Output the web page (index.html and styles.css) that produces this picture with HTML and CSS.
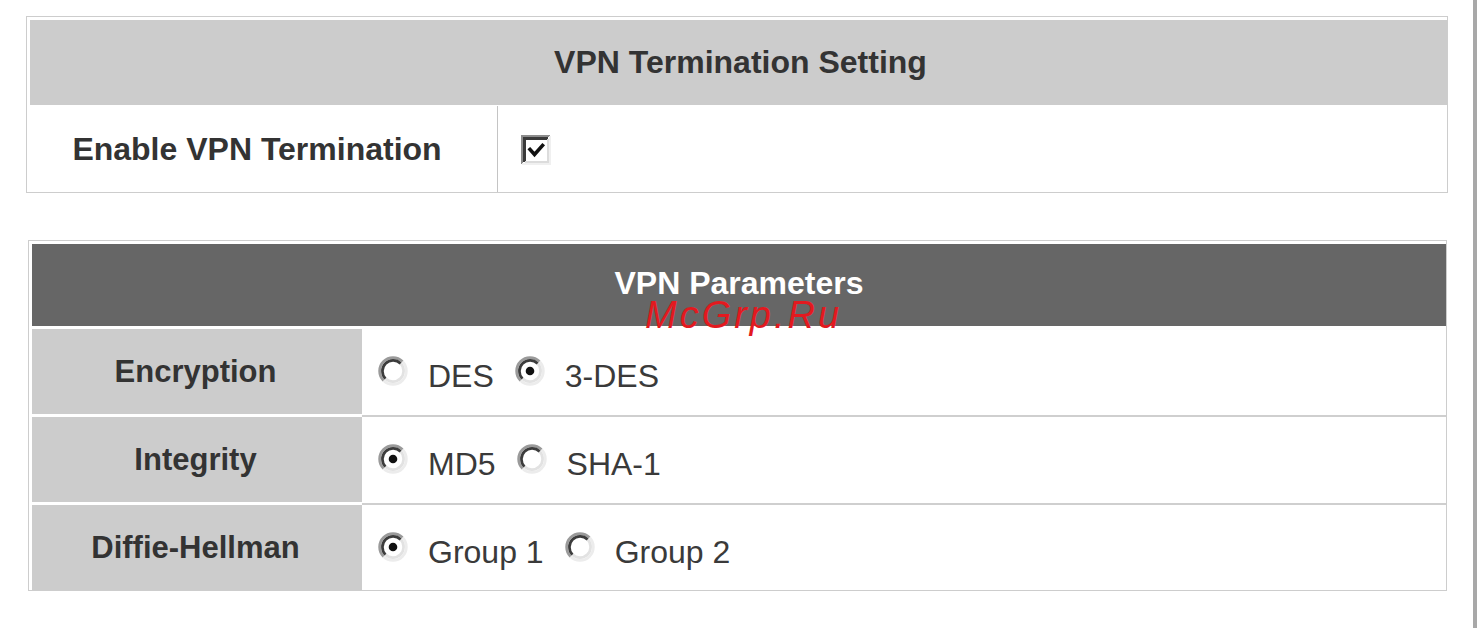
FILE: index.html
```html
<!DOCTYPE html>
<html lang="en">
<head>
<meta charset="utf-8">
<title>VPN Termination Setting</title>
<link rel="stylesheet" href="styles.css">
</head>
<body>
<div class="page">
  <main class="content">
    <section class="panel panel-setting">
      <div class="head head-light">VPN Termination Setting</div>
      <div class="row-setting">
        <div class="cell-label">Enable VPN Termination</div>
        <div class="cell-value">
          <svg class="checkbox" width="30" height="30" viewBox="0 0 30 30" aria-hidden="true">
            <rect x="0" y="0" width="30" height="30" fill="#ffffff"/>
            <path d="M1 29 V1 H29" fill="none" stroke="#8c8c8c" stroke-width="2"/>
            <path d="M3.5 27 V3.5 H27" fill="none" stroke="#3a3a3a" stroke-width="3"/>
            <path d="M29 1 V29 H1" fill="none" stroke="#f0f0f0" stroke-width="2"/>
            <path d="M27 4 V27 H4" fill="none" stroke="#dcdcdc" stroke-width="2"/>
            <path d="M9 14.5 L13.5 19.5 L21.5 10.5" fill="none" stroke="#111" stroke-width="3.6" stroke-linecap="square"/>
          </svg>
        </div>
      </div>
    </section>

    <section class="panel panel-params">
      <div class="head head-dark"><span class="head-text">VPN Parameters</span></div>
      <div class="row">
        <div class="label">Encryption</div>
        <div class="val">
          <span class="opt"><svg class="radio" width="30" height="30" viewBox="0 0 28 28"><path d="M22.84 5.16 A12.5 12.5 0 0 1 5.16 22.84" fill="none" stroke="#ececec" stroke-width="2.5"/><path d="M21.07 6.93 A10 10 0 0 1 6.93 21.07" fill="none" stroke="#e2e2e2" stroke-width="2.5"/><path d="M5.16 22.84 A12.5 12.5 0 0 1 22.84 5.16" fill="none" stroke="#9a9a9a" stroke-width="2.5"/><path d="M6.93 21.07 A10 10 0 0 1 21.07 6.93" fill="none" stroke="#3c3c3c" stroke-width="2.5"/></svg><span class="txt">DES</span></span>
          <span class="opt"><svg class="radio" width="30" height="30" viewBox="0 0 28 28"><path d="M22.84 5.16 A12.5 12.5 0 0 1 5.16 22.84" fill="none" stroke="#ececec" stroke-width="2.5"/><path d="M21.07 6.93 A10 10 0 0 1 6.93 21.07" fill="none" stroke="#e2e2e2" stroke-width="2.5"/><path d="M5.16 22.84 A12.5 12.5 0 0 1 22.84 5.16" fill="none" stroke="#9a9a9a" stroke-width="2.5"/><path d="M6.93 21.07 A10 10 0 0 1 21.07 6.93" fill="none" stroke="#3c3c3c" stroke-width="2.5"/><circle cx="14" cy="14" r="4" fill="#111"/></svg><span class="txt">3-DES</span></span>
        </div>
      </div>
      <div class="row">
        <div class="label">Integrity</div>
        <div class="val">
          <span class="opt"><svg class="radio" width="30" height="30" viewBox="0 0 28 28"><path d="M22.84 5.16 A12.5 12.5 0 0 1 5.16 22.84" fill="none" stroke="#ececec" stroke-width="2.5"/><path d="M21.07 6.93 A10 10 0 0 1 6.93 21.07" fill="none" stroke="#e2e2e2" stroke-width="2.5"/><path d="M5.16 22.84 A12.5 12.5 0 0 1 22.84 5.16" fill="none" stroke="#9a9a9a" stroke-width="2.5"/><path d="M6.93 21.07 A10 10 0 0 1 21.07 6.93" fill="none" stroke="#3c3c3c" stroke-width="2.5"/><circle cx="14" cy="14" r="4" fill="#111"/></svg><span class="txt">MD5</span></span>
          <span class="opt"><svg class="radio" width="30" height="30" viewBox="0 0 28 28"><path d="M22.84 5.16 A12.5 12.5 0 0 1 5.16 22.84" fill="none" stroke="#ececec" stroke-width="2.5"/><path d="M21.07 6.93 A10 10 0 0 1 6.93 21.07" fill="none" stroke="#e2e2e2" stroke-width="2.5"/><path d="M5.16 22.84 A12.5 12.5 0 0 1 22.84 5.16" fill="none" stroke="#9a9a9a" stroke-width="2.5"/><path d="M6.93 21.07 A10 10 0 0 1 21.07 6.93" fill="none" stroke="#3c3c3c" stroke-width="2.5"/></svg><span class="txt">SHA-1</span></span>
        </div>
      </div>
      <div class="row">
        <div class="label">Diffie-Hellman</div>
        <div class="val">
          <span class="opt"><svg class="radio" width="30" height="30" viewBox="0 0 28 28"><path d="M22.84 5.16 A12.5 12.5 0 0 1 5.16 22.84" fill="none" stroke="#ececec" stroke-width="2.5"/><path d="M21.07 6.93 A10 10 0 0 1 6.93 21.07" fill="none" stroke="#e2e2e2" stroke-width="2.5"/><path d="M5.16 22.84 A12.5 12.5 0 0 1 22.84 5.16" fill="none" stroke="#9a9a9a" stroke-width="2.5"/><path d="M6.93 21.07 A10 10 0 0 1 21.07 6.93" fill="none" stroke="#3c3c3c" stroke-width="2.5"/><circle cx="14" cy="14" r="4" fill="#111"/></svg><span class="txt">Group 1</span></span>
          <span class="opt"><svg class="radio" width="30" height="30" viewBox="0 0 28 28"><path d="M22.84 5.16 A12.5 12.5 0 0 1 5.16 22.84" fill="none" stroke="#ececec" stroke-width="2.5"/><path d="M21.07 6.93 A10 10 0 0 1 6.93 21.07" fill="none" stroke="#e2e2e2" stroke-width="2.5"/><path d="M5.16 22.84 A12.5 12.5 0 0 1 22.84 5.16" fill="none" stroke="#9a9a9a" stroke-width="2.5"/><path d="M6.93 21.07 A10 10 0 0 1 21.07 6.93" fill="none" stroke="#3c3c3c" stroke-width="2.5"/></svg><span class="txt">Group 2</span></span>
        </div>
      </div>
    </section>
  </main>
  <div class="edge"></div>
  <div class="watermark">McGrp.Ru</div>
</div>
</body>
</html>
```

FILE: styles.css
```css
html, body {
  margin: 0;
  padding: 0;
  background: #ffffff;
}

body {
  font-family: "Liberation Sans", Arial, sans-serif;
  color: #333333;
  overflow: hidden;
}

.page {
  position: relative;
  display: flex;
  height: 628px;
}

.content {
  flex: 1;
  padding: 16px 25px 0 26px;
}

.panel {
  border: 1px solid #cdcdcd;
  background: #ffffff;
}

.head {
  display: flex;
  align-items: center;
  justify-content: center;
  font-weight: bold;
  font-size: 32px;
}

.head-light {
  margin: 3px 0 0 3px;
  height: 85px;
  background: #cccccc;
  color: #333333;
  padding-left: 4px;
}

.row-setting {
  display: flex;
  height: 86px;
  margin-top: 1px;
}

.cell-label {
  width: 471px;
  border-right: 1px solid #c4c4c4;
  display: flex;
  align-items: center;
  justify-content: center;
  padding-right: 10px;
  box-sizing: border-box;
  font-weight: bold;
  font-size: 32px;
  color: #333333;
}

.cell-value {
  flex: 1;
  display: flex;
  align-items: center;
  padding-left: 23px;
}

.checkbox {
  display: block;
  margin-top: 2px;
}

.panel-params {
  margin: 47px 1px 0 2px;
}

.head-dark {
  margin: 3px 0 0 3px;
  height: 82px;
  box-sizing: border-box;
  padding-bottom: 4px;
  background: #666666;
  color: #ffffff;
}

.head-text {
  line-height: 32px;
}

.row {
  display: flex;
  height: 85px;
  border-top: 3px solid #ffffff;
}

.label {
  width: 330px;
  margin-left: 3px;
  background: #cccccc;
  display: flex;
  align-items: center;
  justify-content: center;
  font-weight: bold;
  font-size: 31px;
  color: #333333;
  padding-right: 3px;
  box-sizing: border-box;
}

.row + .row .val {
  box-shadow: 0 -2px 0 #cfcfcf;
}

.val {
  flex: 1;
  display: flex;
  align-items: center;
  padding-left: 16px;
  gap: 21px;
  background: #ffffff;
}

.opt {
  display: flex;
  align-items: center;
  gap: 20px;
}

.radio {
  display: block;
  margin-top: -2px;
}

.txt {
  font-size: 32px;
  color: #3a3a3a;
  padding-top: 10px;
}

.edge {
  width: 4px;
  background: #a8a8a8;
}

.watermark {
  position: absolute;
  left: 645px;
  top: 300px;
  font-size: 38px;
  line-height: 30px;
  font-style: italic;
  letter-spacing: 3px;
  color: #e3191f;
}
```
